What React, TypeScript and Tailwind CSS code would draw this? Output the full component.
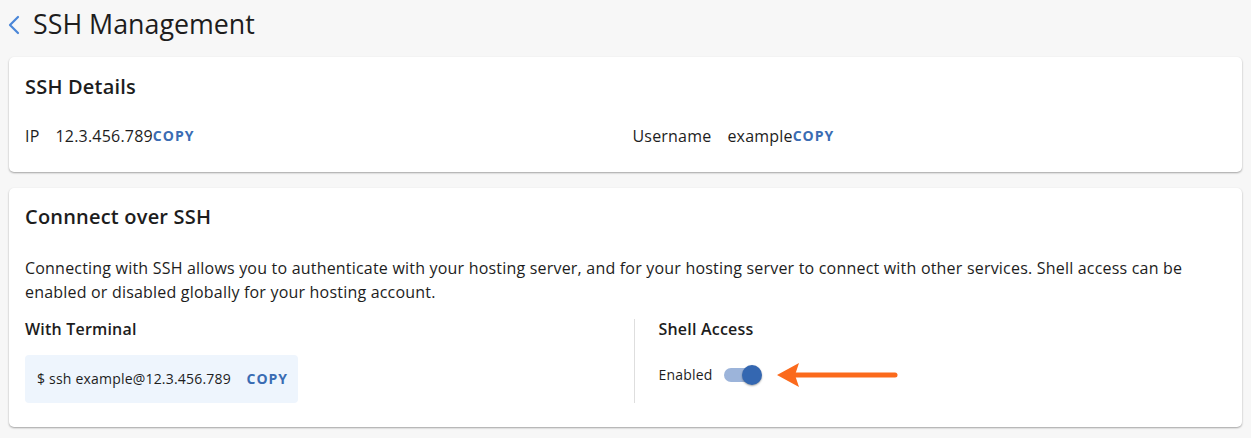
import React, { useState } from 'react';

const CopyButton: React.FC<{ className?: string }> = ({ className = '' }) => (
  <button className={`text-sm font-bold uppercase tracking-[0.07em] text-[#3a6cb3] ${className}`}>
    Copy
  </button>
);

const Toggle: React.FC<{ on: boolean; onChange: (v: boolean) => void }> = ({ on, onChange }) => (
  <button
    onClick={() => onChange(!on)}
    className="relative flex h-[20px] w-[38px] items-center"
    aria-pressed={on}
  >
    <span className={`h-[14px] w-[36px] rounded-full ${on ? 'bg-[#9cb4da]' : 'bg-gray-300'}`} />
    <span
      className={`absolute top-0 h-[20px] w-[20px] rounded-full shadow-[0_1px_2px_rgba(0,0,0,0.35)] ${
        on ? 'left-[18px] bg-[#3467b1]' : 'left-0 bg-white'
      }`}
    />
  </button>
);

const Arrow: React.FC = () => (
  <svg width="124" height="26" viewBox="0 0 124 26" className="ml-[13px]">
    <path d="M2 13 L24 1 L20 13 L24 25 Z" fill="#fb6a1c" />
    <line x1="18" y1="13" x2="120" y2="13" stroke="#fb6a1c" strokeWidth="5" strokeLinecap="round" />
  </svg>
);

export default function App() {
  const [shell, setShell] = useState(true);

  return (
    <div
      className="min-h-screen bg-[#f7f7f7] px-[9px] pb-4 text-[#1d1d1d]"
      style={{ fontFamily: '"Open Sans", "Noto Sans", sans-serif' }}
    >
      {/* Header */}
      <div className="flex h-[49px] items-center gap-[12px] pb-[1px]">
        <svg width="14" height="22" viewBox="0 0 14 22" className="-ml-[2px] mt-[1px]">
          <path d="M11 3 L3 11 L11 19" fill="none" stroke="#4a86d8" strokeWidth="2.2" strokeLinecap="round" strokeLinejoin="round" />
        </svg>
        <h1 className="text-[26.8px] leading-none">SSH Management</h1>
      </div>

      <div className="mt-[8px] flex flex-col gap-4 tracking-[0.0125em]">
        {/* SSH Details */}
        <section className="rounded-[5px] bg-white px-4 pb-6 pt-4 shadow-[0_1px_2px_rgba(0,0,0,0.35)]">
          <h2 className="text-[20px] font-semibold leading-7">SSH Details</h2>
          <div className="mt-[23px] grid grid-cols-2 gap-4 text-base leading-6">
            <div className="flex items-center">
              <span className="mr-[16px]">IP</span>
              <span>12.3.456.789</span>
              <CopyButton />
            </div>
            <div className="-ml-[1px] flex items-center">
              <span className="mr-[16px]">Username</span>
              <span>example</span>
              <CopyButton />
            </div>
          </div>
        </section>

        {/* Connect over SSH */}
        <section className="rounded-[5px] bg-white px-4 pb-6 pt-[15px] shadow-[0_1px_2px_rgba(0,0,0,0.35)]">
          <h2 className="text-[20px] font-semibold leading-7">Connnect over SSH</h2>
          <p className="mt-[25px] text-base leading-6">
            Connecting with SSH allows you to authenticate with your hosting server, and for your hosting server to
            connect with other services. Shell access can be enabled or disabled globally for your hosting account.
          </p>
          <div className="mt-[13px] grid grid-cols-2 gap-4">
            <div>
              <h3 className="text-base font-semibold leading-6">With Terminal</h3>
              <div className="mt-[14px] flex h-12 w-[273px] items-center justify-between rounded bg-[#eef5fd] pl-3 pr-[10px] text-sm">
                <span>$ ssh example@12.3.456.789</span>
                <CopyButton />
              </div>
            </div>
            <div className="mt-[2px] border-l border-[#dedede] pl-6">
              <h3 className="-mt-[2px] text-base font-semibold leading-6">Shell Access</h3>
              <div className="mt-[21px] flex items-center">
                <span className="mr-[11px] text-sm">Enabled</span>
                <Toggle on={shell} onChange={setShell} />
                <Arrow />
              </div>
            </div>
          </div>
        </section>
      </div>
    </div>
  );
}
